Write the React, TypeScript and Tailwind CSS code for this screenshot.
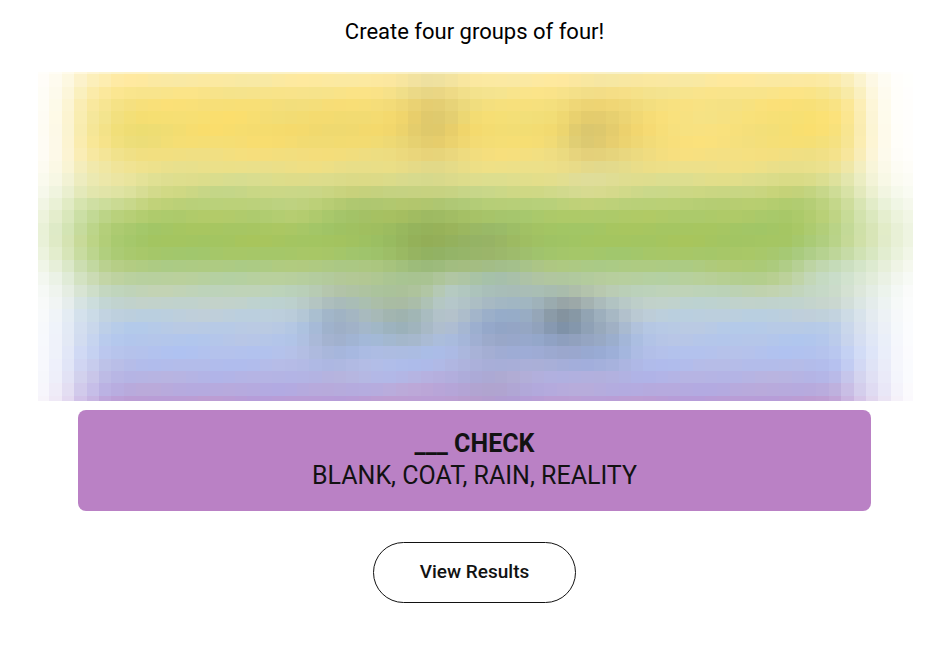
const CELL = 12.37;
const LEFT = 38;
const TOP = 72;
const WIDTH = 875;
const HEIGHT = 329;
const FIRST_COL = 3;
const FIRST_ROW = 5;

type RGB = [number, number, number];

// one colour for each band of cells, top to bottom
const ROW_COLORS = [
  "#fcf2c6", "#fbe9a2", "#f8e48c", "#f7e07c", "#f6df75", "#f5dd71", "#f5de75",
  "#f3df80", "#ece089", "#dfde8d", "#cdd886", "#b9d077", "#adca69", "#a5c662",
  "#a4c560", "#a5c769", "#aecb82", "#b8d09e", "#bfd3b8", "#c0d2cd", "#bccfdd",
  "#b7cae6", "#b4c6ea", "#b3c2ed", "#b3bcea", "#b5b4e4", "#b6aade", "#b99dd6",
];

interface Fade {
  left: number[];
  right: number[];
}

// opacity of the outer columns, listed from the edge inwards
const YELLOW_FADE: Fade = {
  left: [0.08, 0.17, 0.33, 0.57, 0.74, 0.84, 0.94, 0.98],
  right: [0.02, 0.04, 0.14, 0.3, 0.55, 0.78, 0.92, 0.97],
};
const GREEN_FADE: Fade = {
  left: [0.25, 0.36, 0.48, 0.63, 0.75, 0.85, 0.92, 0.95, 0.98],
  right: [0.19, 0.26, 0.34, 0.45, 0.55, 0.67, 0.78, 0.86, 0.92, 0.97],
};
const BLUE_FADE: Fade = {
  left: [0.11, 0.22, 0.39, 0.62, 0.76, 0.91, 0.97],
  right: [0.06, 0.14, 0.28, 0.42, 0.58, 0.76, 0.92, 0.98],
};

interface Spot {
  x: number;
  y: number;
  rx: number;
  ry: number;
  color: string;
  strength: number;
}

const SPOTS: Spot[] = [
  { x: 432, y: 122, rx: 32, ry: 40, color: "#a89860", strength: 0.32 },
  { x: 588, y: 133, rx: 26, ry: 32, color: "#a09260", strength: 0.24 },
  { x: 618, y: 130, rx: 38, ry: 34, color: "#b89c58", strength: 0.2 },
  { x: 335, y: 128, rx: 75, ry: 28, color: "#eccc5e", strength: 0.25 },
  { x: 230, y: 116, rx: 44, ry: 20, color: "#fade6c", strength: 0.45 },
  { x: 135, y: 134, rx: 34, ry: 18, color: "#e8dc70", strength: 0.5 },
  { x: 700, y: 125, rx: 60, ry: 32, color: "#fbe48a", strength: 0.6 },
  { x: 805, y: 122, rx: 38, ry: 22, color: "#fae170", strength: 0.6 },
  { x: 590, y: 184, rx: 34, ry: 16, color: "#e6e0ac", strength: 0.42 },
  { x: 118, y: 186, rx: 34, ry: 24, color: "#eeeab4", strength: 0.5 },
  { x: 225, y: 199, rx: 42, ry: 18, color: "#bad282", strength: 0.4 },
  { x: 292, y: 202, rx: 30, ry: 22, color: "#ccd584", strength: 0.45 },
  { x: 362, y: 213, rx: 36, ry: 30, color: "#8cab58", strength: 0.25 },
  { x: 720, y: 206, rx: 34, ry: 14, color: "#b8c862", strength: 0.4 },
  { x: 800, y: 205, rx: 40, ry: 24, color: "#a3c562", strength: 0.45 },
  { x: 428, y: 242, rx: 40, ry: 38, color: "#7c9650", strength: 0.46 },
  { x: 488, y: 246, rx: 42, ry: 26, color: "#7c9474", strength: 0.34 },
  { x: 510, y: 284, rx: 40, ry: 18, color: "#9cb6c0", strength: 0.45 },
  { x: 760, y: 264, rx: 44, ry: 20, color: "#a8c86a", strength: 0.6 },
  { x: 830, y: 276, rx: 42, ry: 24, color: "#d0e0e0", strength: 0.5 },
  { x: 385, y: 290, rx: 50, ry: 22, color: "#a6c287", strength: 0.55 },
  { x: 338, y: 326, rx: 32, ry: 36, color: "#8895aa", strength: 0.5 },
  { x: 402, y: 322, rx: 36, ry: 28, color: "#83998e", strength: 0.52 },
  { x: 452, y: 300, rx: 18, ry: 24, color: "#c2cfd2", strength: 0.55 },
  { x: 502, y: 328, rx: 46, ry: 34, color: "#7b8db2", strength: 0.6 },
  { x: 566, y: 321, rx: 32, ry: 28, color: "#68757f", strength: 0.68 },
  { x: 604, y: 332, rx: 30, ry: 32, color: "#8496a4", strength: 0.45 },
  { x: 570, y: 354, rx: 50, ry: 18, color: "#8f9bc9", strength: 0.42 },
  { x: 488, y: 386, rx: 40, ry: 26, color: "#a89dbc", strength: 0.45 },
  { x: 380, y: 368, rx: 40, ry: 18, color: "#b2bfea", strength: 0.6 },
  { x: 436, y: 392, rx: 36, ry: 14, color: "#c3a0d0", strength: 0.45 },
  { x: 590, y: 384, rx: 44, ry: 14, color: "#b0b0e2", strength: 0.5 },
];

function parse(hex: string): RGB {
  const n = parseInt(hex.slice(1), 16);
  return [n >> 16, (n >> 8) & 255, n & 255];
}

function mix(a: RGB, b: RGB, t: number): RGB {
  return [
    a[0] + (b[0] - a[0]) * t,
    a[1] + (b[1] - a[1]) * t,
    a[2] + (b[2] - a[2]) * t,
  ];
}

function opacityFrom(fade: Fade, col: number, cols: number) {
  return (fade.left[col] ?? 1) * (fade.right[cols - 1 - col] ?? 1);
}

function edgeOpacity(col: number, cols: number, y: number) {
  const yellow = opacityFrom(YELLOW_FADE, col, cols);
  const green = opacityFrom(GREEN_FADE, col, cols);
  const blue = opacityFrom(BLUE_FADE, col, cols);
  if (y < 230) {
    const t = Math.min(1, Math.max(0, (y - 150) / 75));
    return yellow + (green - yellow) * t;
  }
  const t = Math.min(1, Math.max(0, (y - 240) / 60));
  return green + (blue - green) * t;
}

// slow drift so that neighbouring cells differ slightly
function drift(col: number, row: number) {
  return 2 * Math.sin(col * 0.9 + row * 1.7) + 2 * Math.sin(col * 0.37 - row * 0.8);
}

function buildCells() {
  const right = LEFT + WIDTH;
  const bottom = TOP + HEIGHT;
  const cols = 71;
  const cells: { x: number; y: number; w: number; h: number; fill: string }[] = [];

  ROW_COLORS.forEach((hex, row) => {
    const y0 = Math.max(TOP, Math.round((FIRST_ROW + row) * CELL));
    const y1 = Math.min(bottom, Math.round((FIRST_ROW + row + 1) * CELL));
    const cy = (FIRST_ROW + row + 0.5) * CELL;

    for (let col = 0; col < cols; col++) {
      const x0 = Math.max(LEFT, Math.round((FIRST_COL + col) * CELL));
      const x1 = Math.min(right, Math.round((FIRST_COL + col + 1) * CELL));
      const cx = (FIRST_COL + col + 0.5) * CELL;

      let color = parse(hex);
      for (const s of SPOTS) {
        const d = ((cx - s.x) / s.rx) ** 2 + ((cy - s.y) / s.ry) ** 2;
        color = mix(color, parse(s.color), s.strength * Math.exp(-d));
      }
      const n = drift(col, row);
      color = [color[0] + n, color[1], color[2] - n];
      color = mix([255, 255, 255], color, edgeOpacity(col, cols, cy));

      cells.push({
        x: x0 - LEFT,
        y: y0 - TOP,
        w: x1 - x0,
        h: y1 - y0,
        fill: `rgb(${color.map(Math.round).join(",")})`,
      });
    }
  });
  return cells;
}

const CELLS = buildCells();

function Mosaic() {
  return (
    <svg
      viewBox={`0 0 ${WIDTH} ${HEIGHT}`}
      className="block h-auto w-full"
      shapeRendering="crispEdges"
      aria-hidden="true"
    >
      {CELLS.map((c) => (
        <rect key={`${c.x}-${c.y}`} x={c.x} y={c.y} width={c.w} height={c.h} fill={c.fill} />
      ))}
    </svg>
  );
}

export default function App() {
  return (
    <main className="flex min-h-screen flex-col bg-white pr-[3px] pb-8 font-['Roboto','Liberation_Sans',sans-serif] text-[#121212]">
      <h1 className="pt-4 text-center text-[22px] leading-8 font-normal text-black">
        Create four groups of four!
      </h1>

      <div className="mt-6 pr-9 pl-[38px]">
        <Mosaic />
      </div>

      <div className="mt-[9px] px-[78px]">
        <section className="flex flex-col items-center justify-center rounded-lg bg-[#ba81c5] pt-[18px] pb-[19px] text-center text-[25px] leading-8">
          <h2 className="font-bold">___ CHECK</h2>
          <p>BLANK, COAT, RAIN, REALITY</p>
        </section>
      </div>

      <button
        type="button"
        className="mt-[31px] self-center rounded-full border border-[#121212] px-[46px] pt-[14px] pb-4 text-[19px] leading-[29px] font-medium"
      >
        View Results
      </button>
    </main>
  );
}
